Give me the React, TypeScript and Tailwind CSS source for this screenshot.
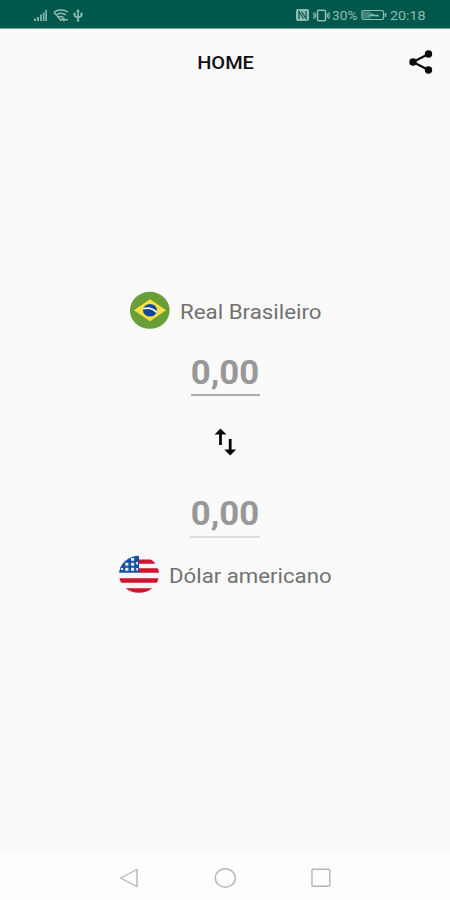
import React from "react";

function StatusBar() {
  return (
    <div className="flex h-[28px] w-full shrink-0 items-center justify-between bg-[#00574b] pl-[34px] pr-[24px] pt-[2px] text-[#8fbdb4]">
      <div className="flex items-center gap-[5px]">
        <svg width="14" height="12" viewBox="0 0 14 12" fill="currentColor">
          <path d="M0 9.500h2V12H0zM3 8h2v4H3zM6 5.500h2V12H6zM8.800 3.500h1.800V12H8.800zM11.200 1H13v11h-1.800z" opacity=".85" />
        </svg>
        <svg width="16" height="13" viewBox="0 0 16 13" fill="none" stroke="currentColor" strokeWidth="1.400">
          <path d="M.8 3.200C5 .2 11 .2 15.200 3.200M3 6c3-2.200 7-2.200 10 0M5.200 8.500c2-1.500 3.600-1.500 5.400 0M1 3.300l7 8.200 2-2.200" />
          <path d="M10 10.800h5M11.500 9.300L10 10.800l1.500 1.500" />
        </svg>
        <svg className="-ml-px" width="10" height="13" viewBox="0 0 10 13" fill="none" stroke="currentColor" strokeWidth="1.600">
          <path d="M5 11V2M1.500 4.500v2.300L5 9l3.500-2.300V4.500" />
          <path d="M5 0l2 2.800H3zM.5 3.800h2v2h-2zM7.500 3.800h2v2h-2zM3.800 10.500h2.400v2H3.800z" fill="currentColor" stroke="none" />
        </svg>
      </div>
      <div className="flex items-center">
        <svg width="13" height="12" viewBox="0 0 13 12">
          <rect width="13" height="12" rx="2" fill="#8fbdb4" />
          <path d="M3 10V2.500l4.500 7M5.500 2.500l4.500 7V2" fill="none" stroke="#00574b" strokeWidth="1.200" />
        </svg>
        <svg className="ml-[4px]" width="17" height="13" viewBox="0 0 17 13" fill="none" stroke="currentColor" strokeWidth="1.500">
          <rect x="4.500" y="1.200" width="8" height="10.600" rx="1" />
          <path d="M1 3v7M2.700 4.500v4M14.300 4.500v4M16 3v7" strokeWidth="1.200" />
        </svg>
        <span className="ml-[2px] w-[27px] whitespace-nowrap text-[13px] leading-none">
          <span className="inline-block origin-left scale-x-[1.060]">30%</span>
        </span>
        <svg className="ml-[2px]" width="26" height="12" viewBox="0 0 26 12" fill="none" stroke="currentColor">
          <rect x="1" y="1.500" width="21.500" height="9" rx="1.500" strokeWidth="1.200" />
          <path d="M24.500 4v4" strokeWidth="1.500" />
          <path d="M2 2.500h8v7H2z" fill="currentColor" stroke="none" opacity=".45" />
          <path d="M7.500 6.800l4.500-2.300v1.500h5.500v1.300z" fill="currentColor" strokeWidth=".5" />
        </svg>
        <span className="ml-[3px] w-[36px] whitespace-nowrap text-[13px] leading-none">
          <span className="inline-block origin-left scale-x-[1.100]">20:18</span>
        </span>
      </div>
    </div>
  );
}

function BrazilFlag() {
  return (
    <svg className="shrink-0" width="40" height="38" viewBox="0 0 40 38">
      <ellipse cx="19.800" cy="19.300" rx="19.800" ry="18.500" fill="#689f38" />
      <path d="M4 19.300L20 8.300l16 11-16 11z" fill="#ffe040" />
      <ellipse cx="20" cy="19.300" rx="7" ry="6.300" fill="#0d47a1" />
      <path d="M13.200 17.600c5-1.200 10.300.2 13.500 3.700" fill="none" stroke="#f4faff" strokeWidth="1.800" />
    </svg>
  );
}

function UsaFlag() {
  return (
    <svg className="shrink-0" width="40" height="38" viewBox="0 0 40 38">
      <defs>
        <clipPath id="usa-round">
          <ellipse cx="20" cy="19.300" rx="20" ry="18.500" />
        </clipPath>
      </defs>
      <g clipPath="url(#usa-round)">
        <rect width="40" height="38" fill="#f7f5f5" />
        <path d="M20 4.500h20v4.300H20zM20 13.300h20v4.500H20zM0 23.300h40v4.500H0zM0 33.300h40V38H0z" fill="#d0142c" />
        <path d="M0 0h20v17.800H0z" fill="#1551a5" />
        <path d="M12 3h3.200v2.800H12zM6.200 7.800h3.200v2.900H6.200zM12 7.800h3.200v2.900H12zM17.200 7H19v2.600h-1.800zM6.200 12.800h3.200v2.900H6.200zM12 12.800h3.200v2.900H12zM17.200 13H19v2.600h-1.800zM2 13h2v2H2z" fill="#e8f2ff" />
      </g>
    </svg>
  );
}

function Currency({ flag, children }: { flag: React.ReactNode; children: React.ReactNode }) {
  return (
    <div className="flex h-[38px] items-center gap-[10px]">
      {flag}
      {children}
    </div>
  );
}

function Amount({ faint }: { faint?: boolean }) {
  return (
    <div className={faint ? "h-[46px] w-[70px] border-b-2 border-[#dcdcdc] text-center" : "h-[45px] w-[69px] border-b-2 border-[#acacac] text-center"}>
      <span className="inline-block scale-x-[1.070] whitespace-nowrap text-[32.500px] font-bold leading-[44px] text-[#989898]">0,00</span>
    </div>
  );
}

export default function App() {
  return (
    <div className="flex h-[900px] w-[450px] flex-col overflow-hidden bg-[#fafafa] font-[Roboto,sans-serif]">
      <StatusBar />
      <header className="grid h-[67px] shrink-0 grid-cols-[1fr_auto_1fr] items-center border-t border-[#6f9f98] pr-[17px]">
        <h1 className="col-start-2 ml-[18px] pt-px text-[18px] font-medium leading-none text-[#111]">
          <span className="inline-block scale-x-[1.110]">HOME</span>
        </h1>
        <svg className="justify-self-end" width="25" height="24" viewBox="0 0 25 24">
          <path d="M20.500 4L5 12l15.500 8" fill="none" stroke="#0a0a0a" strokeWidth="2.200" />
          <circle cx="20.500" cy="4" r="3.700" fill="#0a0a0a" />
          <circle cx="5" cy="12" r="3.700" fill="#0a0a0a" />
          <circle cx="20.500" cy="20" r="3.700" fill="#0a0a0a" />
        </svg>
      </header>
      <main className="flex grow flex-col items-center pt-[196px]">
        <Currency flag={<BrazilFlag />}>
          <span className="w-[141px] whitespace-nowrap pt-[3px] text-[20px] leading-none text-[#717171]">
            <span className="inline-block origin-left scale-x-[1.115]">Real Brasileiro</span>
          </span>
        </Currency>
        <div className="mt-[22px]">
          <Amount />
        </div>
        <svg className="mt-[31px]" width="24" height="30" viewBox="0 0 24 30" fill="none" stroke="#080808" strokeWidth="2.800">
          <path d="M7.500 18V4M17.200 12v14" />
          <path d="M1.500 7.500l6-6 6 6zM11.200 22.500l6 6 6-6z" fill="#080808" stroke="none" />
        </svg>
        <div className="mt-[35px]">
          <Amount faint />
        </div>
        <div className="mt-[17px]">
          <Currency flag={<UsaFlag />}>
            <span className="w-[163px] whitespace-nowrap pt-[3px] text-[20px] leading-none text-[#717171]">
              <span className="inline-block origin-left scale-x-[1.110]">Dólar americano</span>
            </span>
          </Currency>
        </div>
      </main>
      <nav className="flex h-[46px] shrink-0 items-center justify-between bg-[#fdfdfd] pl-[119px] pr-[119px] pt-[2px]">
        <svg width="20" height="20" viewBox="0 0 20 20" fill="none" stroke="#b5b5b5" strokeWidth="1.400">
          <path d="M1.500 10L18 1.500v17z" strokeLinejoin="round" />
        </svg>
        <svg width="22" height="20" viewBox="0 0 22 20" fill="none" stroke="#b5b5b5" strokeWidth="1.400">
          <ellipse cx="11.300" cy="10" rx="10" ry="9.200" />
        </svg>
        <svg width="20" height="20" viewBox="0 0 20 20" fill="none" stroke="#b5b5b5" strokeWidth="1.400">
          <rect x="1" y="1.300" width="17.800" height="17" rx="1" />
        </svg>
      </nav>
    </div>
  );
}
